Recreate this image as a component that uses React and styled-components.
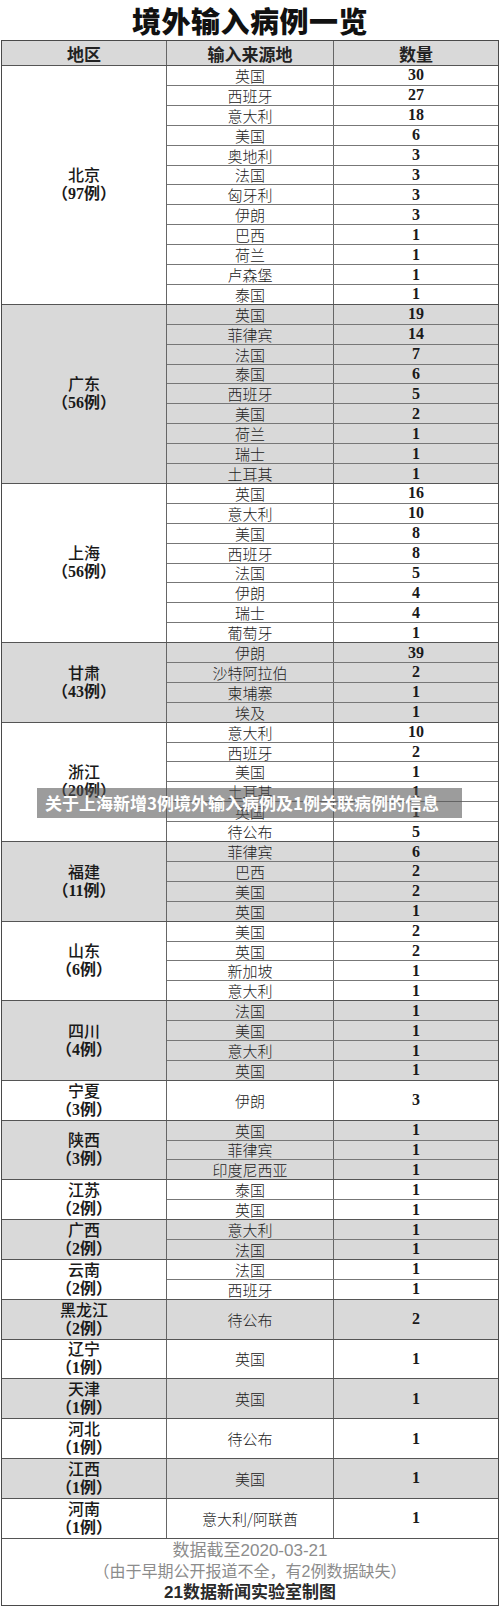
import React from "react";
import styled, { createGlobalStyle } from "styled-components";

const ROW = 19.9;

const GlobalStyle = createGlobalStyle`
  html, body {
    margin: 0;
    padding: 0;
    background: #fff;
  }
  body {
    font-family: "Liberation Serif", "Noto Sans CJK SC", serif;
    color: #222;
  }
`;

const Page = styled.div`
  position: relative;
  width: 500px;
  height: 1607px;
  overflow: hidden;
`;

const Title = styled.h1`
  margin: 0;
  height: 40px;
  line-height: 40px;
  text-align: center;
  font-family: "Noto Sans CJK SC", sans-serif;
  font-weight: 900;
  font-size: 29px;
  color: #111;
  letter-spacing: 0.5px;
`;

const Table = styled.div`
  width: 498px;
  margin-left: 1px;
  box-sizing: border-box;
  border: 1px solid #4a4a4a;
`;

const HeaderRow = styled.div`
  display: flex;
  height: 24px;
  background: #d9d9d9;
`;

const HeadCell = styled.div`
  width: ${(p) => p.$w};
  flex: ${(p) => (p.$grow ? 1 : "none")};
  box-sizing: border-box;
  border-right: ${(p) => (p.$grow ? "none" : "1px solid #666")};
  display: flex;
  align-items: center;
  justify-content: center;
  font-family: "Noto Sans CJK SC", sans-serif;
  font-weight: 700;
  font-size: 17px;
  color: #222;
`;

const Group = styled.div`
  display: flex;
  box-sizing: border-box;
  height: ${(p) => p.$rows * ROW}px;
  border-top: 1px solid #555;
  background: ${(p) => (p.$shade ? "#d9d9d9" : "#fff")};
`;

const RegionCell = styled.div`
  width: 165px;
  flex: none;
  box-sizing: border-box;
  border-right: 1px solid #666;
  display: flex;
  flex-direction: column;
  align-items: center;
  justify-content: center;
  color: #1a1a1a;
`;

const RegionName = styled.div`
  font-family: "Noto Sans CJK SC", sans-serif;
  font-weight: 500;
  font-size: 16px;
  line-height: 19px;
`;

const RegionCount = styled.div`
  display: flex;
  align-items: center;
  font-family: "Liberation Serif", "Noto Sans CJK SC", serif;
  font-weight: 700;
  font-size: 16px;
  line-height: 20px;
`;

const Paren = styled.span`
  display: inline-block;
  width: 1em;
  text-align: ${(p) => (p.$open ? "right" : "left")};
`;

const Rows = styled.div`
  flex: 1;
  display: flex;
  flex-direction: column;
`;

const Row = styled.div`
  flex: 1;
  min-height: 0;
  display: flex;
  box-sizing: border-box;
  border-top: ${(p) => (p.$first ? "none" : "1px solid #777")};
`;

const Source = styled.div`
  width: 167px;
  flex: none;
  box-sizing: border-box;
  border-right: 1px solid #666;
  display: flex;
  align-items: center;
  justify-content: center;
  font-family: "Noto Sans CJK SC", sans-serif;
  font-weight: 300;
  font-size: 15px;
  line-height: 1;
  color: #222;
`;

const Count = styled.div`
  flex: 1;
  display: flex;
  align-items: center;
  justify-content: center;
  font-family: "Liberation Serif", serif;
  font-weight: 700;
  font-size: 16px;
  line-height: 1;
  color: #1a1a1a;
`;

const Footer = styled.div`
  box-sizing: border-box;
  height: 67px;
  border-top: 1px solid #555;
  display: flex;
  flex-direction: column;
  align-items: center;
  justify-content: center;
  font-family: "Liberation Sans", "Noto Sans CJK SC", sans-serif;
`;

const FootLine = styled.div`
  display: flex;
  align-items: center;
  font-size: ${(p) => p.$size || "17px"};
  line-height: 21px;
  color: ${(p) => (p.$dark ? "#2a2a2a" : "#8c8c8c")};
  font-weight: ${(p) => (p.$dark ? 700 : 400)};
`;

const Banner = styled.div`
  position: absolute;
  left: 37px;
  top: 788px;
  width: 425px;
  height: 30px;
  box-sizing: border-box;
  padding-left: 8px;
  background: rgba(85, 85, 85, 0.58);
  color: #fff;
  font-family: "Noto Sans CJK SC", sans-serif;
  font-weight: 700;
  font-size: 17px;
  line-height: 30px;
  white-space: nowrap;
`;

const data = [
  ["北京", "97", [["英国", 30], ["西班牙", 27], ["意大利", 18], ["美国", 6], ["奥地利", 3], ["法国", 3], ["匈牙利", 3], ["伊朗", 3], ["巴西", 1], ["荷兰", 1], ["卢森堡", 1], ["泰国", 1]]],
  ["广东", "56", [["英国", 19], ["菲律宾", 14], ["法国", 7], ["泰国", 6], ["西班牙", 5], ["美国", 2], ["荷兰", 1], ["瑞士", 1], ["土耳其", 1]]],
  ["上海", "56", [["英国", 16], ["意大利", 10], ["美国", 8], ["西班牙", 8], ["法国", 5], ["伊朗", 4], ["瑞士", 4], ["葡萄牙", 1]]],
  ["甘肃", "43", [["伊朗", 39], ["沙特阿拉伯", 2], ["柬埔寨", 1], ["埃及", 1]]],
  ["浙江", "20", [["意大利", 10], ["西班牙", 2], ["美国", 1], ["土耳其", 1], ["英国", 1], ["待公布", 5]]],
  ["福建", "11", [["菲律宾", 6], ["巴西", 2], ["美国", 2], ["英国", 1]]],
  ["山东", "6", [["美国", 2], ["英国", 2], ["新加坡", 1], ["意大利", 1]]],
  ["四川", "4", [["法国", 1], ["美国", 1], ["意大利", 1], ["英国", 1]]],
  ["宁夏", "3", [["伊朗", 3]]],
  ["陕西", "3", [["英国", 1], ["菲律宾", 1], ["印度尼西亚", 1]]],
  ["江苏", "2", [["泰国", 1], ["英国", 1]]],
  ["广西", "2", [["意大利", 1], ["法国", 1]]],
  ["云南", "2", [["法国", 1], ["西班牙", 1]]],
  ["黑龙江", "2", [["待公布", 2]]],
  ["辽宁", "1", [["英国", 1]]],
  ["天津", "1", [["英国", 1]]],
  ["河北", "1", [["待公布", 1]]],
  ["江西", "1", [["美国", 1]]],
  ["河南", "1", [["意大利/阿联酋", 1]]],
];

export default function App() {
  return (
    <Page>
      <GlobalStyle />
      <Title>境外输入病例一览</Title>
      <Table>
        <HeaderRow>
          <HeadCell $w="165px">地区</HeadCell>
          <HeadCell $w="167px">输入来源地</HeadCell>
          <HeadCell $grow>数量</HeadCell>
        </HeaderRow>
        {data.map(([region, total, items], gi) => (
          <Group key={region} $rows={items.length === 1 ? 2 : items.length} $shade={gi % 2 === 1}>
            <RegionCell>
              <RegionName>{region}</RegionName>
              <RegionCount>
                <Paren $open>（</Paren>
                {total}例
                <Paren>）</Paren>
              </RegionCount>
            </RegionCell>
            <Rows>
              {items.map(([src, n], i) => (
                <Row key={i} $first={i === 0}>
                  <Source>{src}</Source>
                  <Count>{n}</Count>
                </Row>
              ))}
            </Rows>
          </Group>
        ))}
        <Footer>
          <FootLine>数据截至2020-03-21</FootLine>
          <FootLine $size="16px">
            <Paren $open>（</Paren>
            由于早期公开报道不全，有2例数据缺失
            <Paren>）</Paren>
          </FootLine>
          <FootLine $dark>21数据新闻实验室制图</FootLine>
        </Footer>
      </Table>
      <Banner>关于上海新增3例境外输入病例及1例关联病例的信息</Banner>
    </Page>
  );
}
